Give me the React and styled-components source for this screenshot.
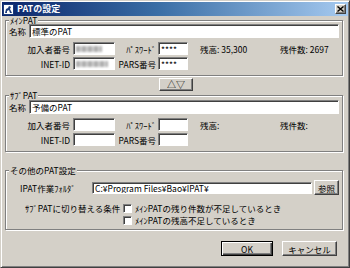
import React from 'react'
import styled, { createGlobalStyle } from 'styled-components'

const GlobalStyle = createGlobalStyle`
  html, body { margin: 0; padding: 0; background: #d4d0c8; }
  body {
    font-family: "Noto Sans CJK JP", "Noto Sans", sans-serif;
    font-size: 8.5px;
    color: #000;
  }
`

const Frame = styled.div`
  width: 350px;
  height: 268px;
  box-sizing: border-box;
  background: #d4d0c8;
  border: 1px solid;
  border-color: #d4d0c8 #404040 #404040 #d4d0c8;
  box-shadow: inset 1px 1px #fff, inset -1px -1px #808080;
  padding: 1px;
  display: flex;
  flex-direction: column;
`

const TitleBar = styled.div`
  height: 14px;
  display: flex;
  align-items: center;
  background: linear-gradient(to right, #0a246a 0%, #3a6ea5 45%, #a6caf0 100%);
  padding: 0 2px 0 1px;
`

const AppIcon = styled.svg`
  width: 11px;
  height: 11px;
  flex: none;
`

const Title = styled.div`
  margin-left: 3px;
  color: #fff;
  font-weight: bold;
  font-size: 9px;
  line-height: 14px;
  flex: 1;
`

const CloseButton = styled.div`
  width: 11px;
  height: 10px;
  box-sizing: border-box;
  background: #d4d0c8;
  border: 1px solid;
  border-color: #fff #404040 #404040 #fff;
  box-shadow: inset -1px -1px #808080;
  display: flex;
  align-items: center;
  justify-content: center;
`

const Body = styled.div`
  flex: 1;
  display: flex;
  flex-direction: column;
  padding: 0 5px 0 3px;
`

const Group = styled.fieldset`
  margin: ${p => p.$top || 0}px 0 0;
  padding: ${p => p.$padTop || 0}px 3px ${p => p.$padBottom || 5}px;
  border: 1px solid #808080;
  box-shadow: inset 1px 1px #fff, 1px 1px #fff;
  min-width: 0;
  display: flex;
  flex-direction: column;
`

const Legend = styled.legend`
  padding: 0 1px;
  margin: 0;
  line-height: 8px;
  background: #d4d0c8;
`

const NameRow = styled.div`
  display: flex;
  align-items: center;
  height: 14px;
  gap: 3px;
`

const NameLabel = styled.span`
  width: 17px;
`

const Field = styled.div`
  box-sizing: border-box;
  height: ${p => p.$h || 13}px;
  width: ${p => (p.$w ? `${p.$w}px` : 'auto')};
  flex: ${p => (p.$w ? 'none' : 1)};
  background: #fff;
  border: 1px solid;
  border-color: #808080 #fff #fff #808080;
  box-shadow: inset 1px 1px #404040;
  padding: 0 2px;
  display: flex;
  align-items: center;
  white-space: nowrap;
  overflow: hidden;
  line-height: 10px;
`

const Blur = styled.span`
  display: block;
  width: ${p => p.$w}px;
  height: 6px;
  background: repeating-linear-gradient(to right, #9a9a9a 0 4px, #c8c8c8 4px 6px);
  filter: blur(1.3px);
  opacity: 0.8;
`

const FieldGrid = styled.div`
  display: grid;
  grid-template-columns: 64px 42px 43px 30px 92px 1fr;
  grid-auto-rows: 13px;
  row-gap: 2px;
  align-items: center;
  margin-top: 4px;
`

const Label = styled.span`
  text-align: right;
  padding-right: ${p => p.$pr || 3}px;
  white-space: nowrap;
`

const Info = styled.span`
  padding-left: ${p => p.$pl || 0}px;
  white-space: nowrap;
  align-self: start;
  margin-top: 1px;
`

const ToggleRow = styled.div`
  display: flex;
  justify-content: center;
  margin-top: 2px;
  padding-left: 4px;
`

const PushButton = styled.div`
  box-sizing: border-box;
  width: ${p => p.$w}px;
  height: ${p => p.$h || 15}px;
  background: #d4d0c8;
  border: 1px solid;
  border-color: ${p => (p.$default ? '#000' : '#fff #404040 #404040 #fff')};
  box-shadow: ${p =>
    p.$default
      ? 'inset 1px 1px #fff, inset -1px -1px #404040, inset -2px -2px #808080'
      : 'inset -1px -1px #808080'};
  display: flex;
  align-items: center;
  justify-content: center;
  white-space: nowrap;
  line-height: 10px;
  font-size: ${p => p.$fs || 8.5}px;
`

const FolderRow = styled.div`
  display: grid;
  grid-template-columns: 81px 1fr 25px;
  column-gap: 2px;
  align-items: center;
  height: 15px;
`

const FolderLabel = styled.span`
  padding-left: 11px;
  white-space: nowrap;
`

const CondGrid = styled.div`
  display: grid;
  grid-template-columns: 111px 9px 1fr;
  grid-auto-rows: 10px;
  column-gap: 3px;
  row-gap: 2px;
  align-items: center;
  margin-top: 8px;
`

const CondLabel = styled.span`
  padding-left: 16px;
  white-space: nowrap;
`

const CheckBox = styled.span`
  box-sizing: border-box;
  width: 9px;
  height: 9px;
  background: #fff;
  border: 1px solid;
  border-color: #808080 #fff #fff #808080;
  box-shadow: inset 1px 1px #404040;
`

const CondText = styled.span`
  white-space: nowrap;
`

const ButtonRow = styled.div`
  display: flex;
  justify-content: flex-end;
  gap: 9px;
  margin-top: 11px;
  padding-right: 6px;
`

function PatGroup({ title, top, padTop, name, filled }) {
  return (
    <Group $top={top} $padTop={padTop}>
      <Legend>{title}</Legend>
      <NameRow>
        <NameLabel>名称</NameLabel>
        <Field $h={14}>{name}</Field>
      </NameRow>
      <FieldGrid>
        <Label>加入者番号</Label>
        <Field $w={42}>{filled && <Blur $w={26} />}</Field>
        <Label $pr={2}>ﾊﾟｽﾜｰﾄﾞ</Label>
        <Field $w={30}>{filled && '****'}</Field>
        <Info $pl={12}>{filled ? '残高: 35,300' : '残高:'}</Info>
        <Info>{filled ? '残件数: 2697' : '残件数:'}</Info>
        <Label>INET-ID</Label>
        <Field $w={42}>{filled && <Blur $w={32} />}</Field>
        <Label $pr={2}>PARS番号</Label>
        <Field $w={30}>{filled && '****'}</Field>
      </FieldGrid>
    </Group>
  )
}

export default function App() {
  return (
    <Frame>
      <GlobalStyle />
      <TitleBar>
        <AppIcon viewBox="0 0 11 11">
          <rect x="0" y="0" width="11" height="11" fill="#fff" />
          <rect x="0.5" y="0.5" width="10" height="10" fill="none" stroke="#1c3c7c" />
          <path d="M2 9 L3 5 L5 4 L6 2 L8 3 L7 5 L9 9 L7 9 L6 6 L4 7 L4 9 Z" fill="#1c3c7c" />
        </AppIcon>
        <Title>PATの設定</Title>
        <CloseButton>
          <svg width="7" height="6" viewBox="0 0 7 6">
            <path d="M0.5 0.5 L6.5 5.5 M6.5 0.5 L0.5 5.5" stroke="#000" strokeWidth="1.4" />
          </svg>
        </CloseButton>
      </TitleBar>
      <Body>
        <PatGroup title="ﾒｲﾝPAT" name="標準のPAT" filled />
        <ToggleRow>
          <PushButton $w={34} $h={13} $fs={9}>△▽</PushButton>
        </ToggleRow>
        <PatGroup title="ｻﾌﾞPAT" padTop={1} name="予備のPAT" />
        <Group $top={14} $padTop={6} $padBottom={4}>
          <Legend>その他のPAT設定</Legend>
          <FolderRow>
            <FolderLabel>IPAT作業ﾌｫﾙﾀﾞ</FolderLabel>
            <Field $h={12}>C:¥Program Files¥Bao¥IPAT¥</Field>
            <PushButton $w={25}>参照</PushButton>
          </FolderRow>
          <CondGrid>
            <CondLabel>ｻﾌﾞPATに切り替える条件</CondLabel>
            <CheckBox />
            <CondText>ﾒｲﾝPATの残り件数が不足しているとき</CondText>
            <span />
            <CheckBox />
            <CondText>ﾒｲﾝPATの残高不足しているとき</CondText>
          </CondGrid>
        </Group>
        <ButtonRow>
          <PushButton $w={52} $default>OK</PushButton>
          <PushButton $w={55}>キャンセル</PushButton>
        </ButtonRow>
      </Body>
    </Frame>
  )
}
